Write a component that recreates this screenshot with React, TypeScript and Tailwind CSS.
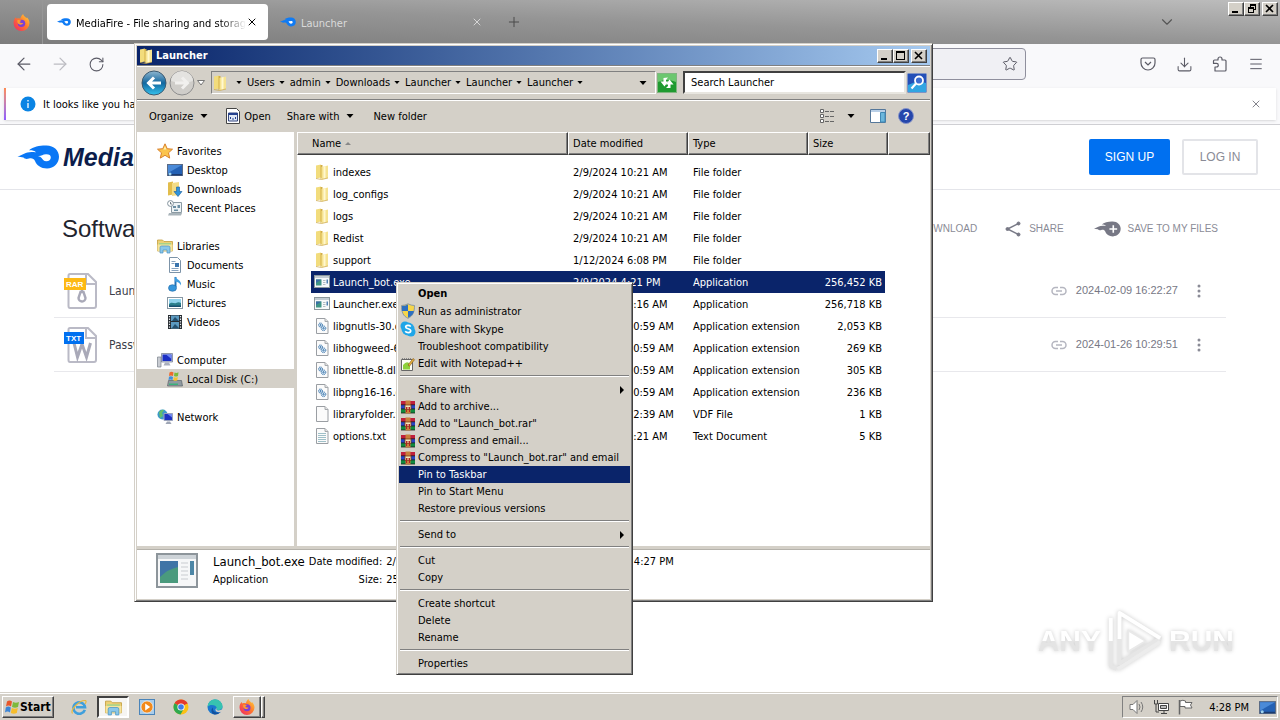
import { ReactNode } from "react";
import {
  ArrowLeft,
  ArrowRight,
  ChevronDown,
  Download,
  Menu,
  Plus,
  RotateCw,
  Star,
  X,
} from "lucide-react";

const UI_FONT = "font-['DejaVu_Sans_Condensed','DejaVu_Sans',sans-serif]";
const RAISED =
  "border border-t-white border-l-white border-r-[#404040] border-b-[#404040] bg-[#d4d0c8] shadow-[inset_-1px_-1px_0_#808080]";

type IconProps = { className?: string };

/* ---------- small icons ---------- */

function FolderIcon({ className = "h-4 w-4" }: IconProps) {
  return (
    <svg viewBox="0 0 16 16" className={className} aria-hidden="true">
      <path d="M2 1.500 7 .5v13l-5 1z" fill="#f2dc7c" />
      <path d="M6.500 1h2v13l-2 1z" fill="#d3ae45" />
      <path d="M7.500 3 14 1.500V14l-6.500 1.500z" fill="#f6e391" />
      <path d="M9.500 2.500 11.500 2v12.500l-2 .5z" fill="#fff8cf" />
      <path d="M2 14.500 7.500 15.500 14 14" fill="none" stroke="#c9a548" strokeWidth=".7" />
    </svg>
  );
}

function ExeIcon({ className = "h-4 w-4" }: IconProps) {
  return (
    <svg viewBox="0 0 16 16" className={className} aria-hidden="true">
      <rect x=".5" y="1.500" width="15" height="12" fill="#f7f9fa" stroke="#8b979c" />
      <path d="M1 2h14v2H1z" fill="#c3ccd2" />
      <path d="M2 5.500h5.500v6H2z" fill="#3f9585" />
      <path d="M2 5.500h5.500L2 9z" fill="#3a6ea5" />
      <path d="M9 6.500h2.500M9 8.500h2.500M9 10.500h2.500" stroke="#b4bcc2" />
      <path d="M12.500 5.500h1.500v4h-1.500z" fill="#4c7fb2" />
    </svg>
  );
}

function PageIcon({ kind }: { kind: "dll" | "blank" | "text" }) {
  return (
    <svg viewBox="0 0 16 16" className="h-4 w-4" aria-hidden="true">
      <path d="M2.500.5h8.500l3 3v12H2.500z" fill="#fbfbfb" stroke="#9a9ea3" />
      <path d="M11 .5v3h3" fill="#e3e3e3" stroke="#a5a9ad" />
      {kind === "dll" && (
        <g fill="#dbe9f5" stroke="#3a76ad">
          <circle cx="6.500" cy="7" r="2" strokeDasharray="1.200 .5" />
          <circle cx="9.500" cy="10.300" r="2.300" strokeDasharray="1.200 .5" />
          <circle cx="6.500" cy="7" r=".6" />
          <circle cx="9.500" cy="10.300" r=".7" />
        </g>
      )}
      {kind === "text" && (
        <path d="M4 5.500h8M4 7.500h8M4 9.500h8M4 11.500h8M4 13.500h8" stroke="#9fc0c8" />
      )}
    </svg>
  );
}

function StarIcon() {
  return (
    <svg viewBox="0 0 16 16" className="h-4 w-4" aria-hidden="true">
      <path
        d="m8 .8 2.200 4.900 5.300.5-4 3.600 1.200 5.300L8 12.300l-4.700 2.800 1.200-5.300-4-3.600 5.300-.5z"
        fill="#fbc44d"
        stroke="#d9802a"
      />
      <path d="m8 3 1.300 3.500H6.500z" fill="#fff0b0" />
    </svg>
  );
}

function DesktopIcon({ className = "h-4 w-4" }: IconProps) {
  return (
    <svg viewBox="0 0 16 16" className={className} aria-hidden="true">
      <rect x=".5" y="2.500" width="15" height="11" fill="#2461b4" stroke="#5b6b85" />
      <path d="M1 3h14L1 11z" fill="#4a8ad8" />
      <path d="M1 12h14v1.500H1z" fill="#1b3b70" />
      <circle cx="3" cy="12" r="1.500" fill="#9fd3ee" />
    </svg>
  );
}

function DownloadsIcon() {
  return (
    <svg viewBox="0 0 16 16" className="h-4 w-4" aria-hidden="true">
      <path d="M1 1.500 6 .5v13l-5 1z" fill="#e2bd4c" />
      <path d="M5 2 12 1v13l-7 1z" fill="#f3dc86" />
      <path d="M9.500 6h3v4.500H15L11 15.500 7 10.500h2.500z" fill="#2f93dc" stroke="#1a5c9b" strokeWidth=".6" />
    </svg>
  );
}

function RecentIcon() {
  return (
    <svg viewBox="0 0 16 16" className="h-4 w-4" aria-hidden="true">
      <path d="M4.500 2.500h10v10h-10z" fill="#eef3f5" stroke="#8b9aa3" />
      <path d="M6 6h3v2H6zM10.500 5H13v3h-2.500zM7 9.500h4v1.500H7z" fill="#6b8ea3" />
      <path d="M2 13h13l-1 2.500H1z" fill="#a9b4ba" />
      <circle cx="3.500" cy="3.500" r="2.900" fill="#fff" stroke="#80919b" />
      <path d="M3.500 2v2H5" fill="none" stroke="#52616a" strokeWidth=".8" />
    </svg>
  );
}

function LibraryIcon({ className = "h-4 w-4" }: IconProps) {
  return (
    <svg viewBox="0 0 16 16" className={className} aria-hidden="true">
      <path d="M.5 13V2h5l1.500 1.500h8.500V13z" fill="#edd176" stroke="#c39d3c" strokeWidth=".8" />
      <path d="M2 5h12v4H2z" fill="#a6d38a" />
      <path d="M.5 6.500h15V13H.5z" fill="#f7e49c" />
      <path d="M3 15V9.500q0-1.500 1.500-1.500h7q1.500 0 1.500 1.500V15h-3v-3H6v3z" fill="#8ac7ea" stroke="#4794c4" strokeWidth=".7" />
    </svg>
  );
}

function DocumentsIcon() {
  return (
    <svg viewBox="0 0 16 16" className="h-4 w-4" aria-hidden="true">
      <path d="M2.500.5h8l3 3v12h-11z" fill="#fff" stroke="#7c93a8" />
      <path d="M4.500 4.500h4M4.500 6.500h3M4.500 11.500h7M4.500 13.500h7" stroke="#87a3bf" />
      <path d="M8 6h4v4H8z" fill="#3974ad" />
    </svg>
  );
}

function MusicIcon() {
  return (
    <svg viewBox="0 0 16 16" className="h-4 w-4" aria-hidden="true">
      <path d="M8.500 1v10" stroke="#2173b8" strokeWidth="2" />
      <path d="M8 .5c1 3 7 3.500 6 9-.8-2.500-3-3.500-6-4z" fill="#3f9ee0" />
      <ellipse cx="5.500" cy="12" rx="4" ry="3.300" fill="#3597dc" stroke="#1d66a5" strokeWidth=".6" />
    </svg>
  );
}

function PicturesIcon() {
  return (
    <svg viewBox="0 0 16 16" className="h-4 w-4" aria-hidden="true">
      <rect x=".5" y="2.500" width="15" height="11" fill="#fff" stroke="#8797a3" />
      <path d="M2 4h12v8H2z" fill="#8fd2ec" />
      <path d="M2 9c3-3 5 0 7-1s3-1 5 0v4H2z" fill="#2b7f8c" />
      <path d="M2 10.500h12V12H2z" fill="#174f70" />
    </svg>
  );
}

function VideosIcon() {
  return (
    <svg viewBox="0 0 16 16" className="h-4 w-4" aria-hidden="true">
      <path d="M1 1h14v14H1z" fill="#262b30" />
      <path d="M4 1.500h8V7H4zM4 8h8v6.500H4z" fill="#5c9ac0" />
      <path d="m5 7 3-4 4 4zM5 14l3-4 4 4z" fill="#24506e" />
      <path d="M2.500 2v12M13.500 2v12" stroke="#e8ecef" strokeWidth="1.200" strokeDasharray="1.300 1.300" />
    </svg>
  );
}

function ComputerIcon() {
  return (
    <svg viewBox="0 0 16 16" className="h-4 w-4" aria-hidden="true">
      <path d="M.5 5h3.500v10H.5z" fill="#c9ccd2" stroke="#7a818c" strokeWidth=".7" />
      <path d="M4.500 1.500h11v8.500h-11z" fill="#c9cfe0" stroke="#6c758b" strokeWidth=".7" />
      <path d="M5.500 2.500h9V9h-9z" fill="#1b2fc4" />
      <path d="M9 2.500h5.500V7z" fill="#6f87f2" />
      <path d="M8 10.500h4l1.500 3h-7z" fill="#a9afbd" />
    </svg>
  );
}

function DiskIcon() {
  return (
    <svg viewBox="0 0 16 16" className="h-4 w-4" aria-hidden="true">
      <path d="M1.500 9.500h13l1 5.500H.5z" fill="#8f9aa0" stroke="#596268" strokeWidth=".7" />
      <path d="M2 12.500h9V14H2z" fill="#3bb27a" />
      <path d="M2.500 1.500q2-1.500 4 0L6 5q-2-1-4 0z" fill="#ef6a2d" />
      <path d="M7.500 1.500q2 1 4-.3L11 5q-2 1-4 0z" fill="#7cbc3a" />
      <path d="M2 5.800q2-1 4 .2L5.500 9q-2-1-4 0z" fill="#3f8fdc" />
      <path d="M6.800 6q2 1 4 0l-.5 3.300q-2 1-4 0z" fill="#f8c32e" />
    </svg>
  );
}

function NetworkIcon() {
  return (
    <svg viewBox="0 0 16 16" className="h-4 w-4" aria-hidden="true">
      <circle cx="5.500" cy="5.500" r="5" fill="#3b9ac9" />
      <path d="M2 3q3-3 5-2L5 4l1 3-3 2z" fill="#63bf6a" />
      <path d="M7 4.500h8.500v7H7z" fill="#1e32c2" stroke="#9aa3bd" />
      <path d="M10.500 5H15v3.500z" fill="#7188f0" />
      <path d="M10 12.500h3l1.500 2.500h-6z" fill="#9fa6b5" />
    </svg>
  );
}

function ShieldIcon() {
  return (
    <svg viewBox="0 0 16 16" className="h-4 w-4" aria-hidden="true">
      <path d="M8 .8Q5 2.500 1.500 2.500C1.500 9 3 13 8 15.300c5-2.300 6.500-6.300 6.500-12.800Q11 2.500 8 .8z" fill="#f6d64a" stroke="#8a99a5" />
      <path d="M8 1.500v6.500H2Q1.800 6 2 3q3 0 6-1.500zM8 8h6q-.8 4.500-6 6.800z" fill="#2d6fc0" />
    </svg>
  );
}

function SkypeIcon() {
  return (
    <svg viewBox="0 0 16 16" className="h-4 w-4" aria-hidden="true">
      <circle cx="5" cy="5" r="4.500" fill="#20a6e8" />
      <circle cx="11" cy="11" r="4.500" fill="#20a6e8" />
      <circle cx="8" cy="8" r="6.500" fill="#20a6e8" />
      <path d="M10.800 5.500Q9.500 4.200 7.800 4.300 5.700 4.500 5.700 6c0 2.300 5 1.200 5 3.800 0 2.400-4 2.500-5.500.5" fill="none" stroke="#fff" strokeWidth="1.700" />
    </svg>
  );
}

function NotepadIcon() {
  return (
    <svg viewBox="0 0 16 16" className="h-4 w-4" aria-hidden="true">
      <path d="M1.500 3.500h11v11h-11z" fill="#fdfdf6" stroke="#666" />
      <path d="M2 2.500h10" stroke="#888" strokeDasharray="1 1" />
      <path d="M3 9q4-5 7-1v5.500H3z" fill="#8fd13b" />
      <path d="m8 9 5-6.500 1.500 1.200-5 6.500z" fill="#e5b23d" stroke="#7c4e16" strokeWidth=".6" />
    </svg>
  );
}

function WinRarIcon() {
  return (
    <svg viewBox="0 0 16 16" className="h-4 w-4" aria-hidden="true">
      <path d="M1 2h14v4H1z" fill="#c01f3c" />
      <path d="M1 6h14v4H1z" fill="#2746c4" />
      <path d="M1 10h14v4H1z" fill="#0f8a3f" />
      <path d="M1 5.800h14M1 9.900h14M1 14h14" stroke="#1c1c1c" strokeWidth=".8" />
      <path d="M5.500 1.500h5v13h-5z" fill="#c9803c" />
      <path d="M5 6h6v4.500H5z" fill="#f4e6b6" stroke="#7c3a16" strokeWidth=".8" />
      <path d="M6.500 13V8l1.500 1.500L9.500 8v5" fill="none" stroke="#b22424" />
    </svg>
  );
}

function FirefoxIcon({ className = "h-4 w-4" }: IconProps) {
  return (
    <svg viewBox="0 0 16 16" className={className} aria-hidden="true">
      <defs>
        <linearGradient id="fx" x1="1" y1="0" x2="0" y2="1">
          <stop offset="0" stopColor="#ffdc3e" />
          <stop offset=".45" stopColor="#ff7a2b" />
          <stop offset="1" stopColor="#f0206a" />
        </linearGradient>
      </defs>
      <path d="M9.500 0c.3 1.800 2 2.500 3 3.800l.8-.6c1.300 1.500 2.200 3.300 2.200 5.300A7.500 7.500 0 0 1 .5 8.500C.5 6 1.300 4.200 2.800 3l.5 1.400C5 3.600 6 4 7 4.300 7.200 2.500 8.300 1 9.500 0z" fill="url(#fx)" />
      <circle cx="8" cy="8.800" r="3.500" fill="#7b3fd6" />
      <path d="M4 6.200c1.500-1 2.800-.3 4 .5-1 .1-1.500.6-1.700 1.300 1 .8 2.400 0 3.400.8-1.500 2-4.700 1.500-5.500-.8z" fill="#ff9a2e" />
    </svg>
  );
}

function FlameIcon({ className, fill = "#0f7bf5" }: IconProps & { fill?: string }) {
  return (
    <svg viewBox="0 0 42 24" className={className} aria-hidden="true">
      <path d="M0 11.500C5 10 8 7 14 7c1.800 0 3 .3 4.500.2C17 5.500 14 5 11.500 5.200 16 1.500 23 .3 29 .5c7.500.2 12.500 5 12.500 11.300S36.500 23.500 29.500 23.500c-6 0-10.500-3.300-12-7.500-1-2.500-3.500-3.300-6-2.500C9 14.300 7.500 14 6 12.500 4 12 2 11.800 0 11.500z" fill={fill} />
      <path d="M20.500 11c3 .5 4.500-1.500 8-1.700 3.200-.1 4.800 1 4.800 3.200s-1.800 3.800-4.500 3.800c-2.500 0-3.500-1.500-4.500-3-1-1.300-2-1.800-3.800-2.300z" fill="#fff" />
    </svg>
  );
}

function WindowsFlag({ className = "h-4 w-4" }: IconProps) {
  return (
    <svg viewBox="0 0 16 16" className={className} aria-hidden="true">
      <path d="M3 2.500q2.500-2 5 0L7 7.500q-2.500-1.800-5 0z" fill="#e8562a" />
      <path d="M9 3q2.800 1.500 6 0l-1 5q-3 1.500-6 0z" fill="#7db93b" />
      <path d="M1.800 8.500q2.500-1.800 5 0L6 13.500q-2.500-1.800-5 0z" fill="#3c85d6" />
      <path d="M7.800 9q3 1.500 6 0l-1 5q-3 1.500-6 0z" fill="#f6bd2c" />
    </svg>
  );
}

function IeIcon() {
  return (
    <svg viewBox="0 0 16 16" className="h-4 w-4" aria-hidden="true">
      <path d="M13.800 10.800A5.800 5.800 0 1 1 14 8.200H5" fill="none" stroke="#3f9fdc" strokeWidth="2.600" />
      <path d="M1.500 14.500C-1 11 8 1 14.500 1.500c1.500 1-.5 3.500-.5 3.500" fill="none" stroke="#e9b93c" strokeWidth="1.200" />
    </svg>
  );
}

function MediaPlayerIcon() {
  return (
    <svg viewBox="0 0 16 16" className="h-4 w-4" aria-hidden="true">
      <rect x=".5" y=".5" width="15" height="15" fill="#a9cdeb" stroke="#4a84b9" />
      <circle cx="8" cy="8" r="6" fill="#f28a1c" stroke="#fff" strokeWidth=".6" />
      <path d="m6.200 4.500 5 3.500-5 3.500z" fill="#fff" />
    </svg>
  );
}

function ChromeIcon() {
  return (
    <svg viewBox="0 0 16 16" className="h-4 w-4" aria-hidden="true">
      <circle cx="8" cy="8" r="7.500" fill="#fbc116" />
      <path d="M8 8 1.500 4.200A7.500 7.500 0 0 1 14.500 4.200z" fill="#e33b2e" />
      <path d="M8 8 1.500 4.200A7.500 7.500 0 0 0 7.500 15.500L11 9.500z" fill="#2da94f" />
      <path d="M8 4.500h6.600L14 3.500H8z" fill="#e33b2e" />
      <circle cx="8" cy="8" r="3.600" fill="#fff" />
      <circle cx="8" cy="8" r="2.800" fill="#3f7de8" />
    </svg>
  );
}

function EdgeIcon() {
  return (
    <svg viewBox="0 0 16 16" className="h-4 w-4" aria-hidden="true">
      <circle cx="8" cy="8" r="7.500" fill="#1b78cf" />
      <path d="M.5 8A7.500 7.500 0 0 1 15.500 7.500c0 2.500-2 3.800-4.500 3.500-2-.2-1.800-1.200-1.300-2C9.500 6 3 4.500.5 8z" fill="#37c3b0" />
      <path d="M6 8.500c-1 4 3.500 6 7.500 4.500a7.500 7.500 0 0 1-6 2.500C4 15 3.500 10 6 8.500z" fill="#12509f" />
      <path d="M9.700 9c-.8 1-.5 2.300 1.800 2.500 1.500 0 3-.5 4-1.700l.5 1.700-2.500 1.500C9 14 7 10.500 9.700 9z" fill="#d4d0c8" />
    </svg>
  );
}

/* Down-pointing triangle used next to menus and breadcrumbs */
function Caret({ className = "h-1 w-2" }: IconProps) {
  return (
    <svg viewBox="0 0 8 4" className={className} aria-hidden="true">
      <path d="M.5 0h7L4 4z" fill="currentColor" />
    </svg>
  );
}

function CaptionButton({ kind }: { kind: "min" | "max" | "restore" | "close" }) {
  return (
    <button type="button" aria-label={kind} className={`flex h-3.5 w-4 items-center justify-center ${RAISED}`}>
      <svg viewBox="0 0 12 10" className="h-2.5 w-3" shapeRendering="crispEdges" fill="none" stroke="#000" aria-hidden="true">
        {kind === "min" && <path d="M2 8h6" strokeWidth="2" />}
        {kind === "max" && (
          <>
            <path d="M1.500 1.500h8v7h-8z" />
            <path d="M1 1h9" strokeWidth="2" />
          </>
        )}
        {kind === "restore" && <path d="M4.500 3V.5h5v5H8M2.500 4.500h5v4h-5zM2 3.500h6M4 1.500h6" />}
        {kind === "close" && <path d="m2 1 7 7M9 1 2 8" strokeWidth="1.600" shapeRendering="auto" />}
      </svg>
    </button>
  );
}

/* ---------- browser behind the window ---------- */

function TabStrip() {
  return (
    <div className="flex h-11 items-start bg-linear-to-tr from-[#7c7c7c] via-[#959595] to-[#bdbdbd]">
      <div className="flex h-11 w-[43px] items-center justify-center border-r border-[#979797]">
        <FirefoxIcon className="h-[17px] w-[17px]" />
      </div>
      <div className="mt-1 ml-1 flex h-9 w-[221px] items-center rounded bg-white px-2.5">
        <FlameIcon className="h-2.5 w-3.5 shrink-0" />
        <span className="ml-1 flex-1 overflow-hidden mask-r-from-85% pt-0.5 pl-px whitespace-nowrap text-black">
          MediaFire - File sharing and storage
        </span>
        <button type="button" aria-label="Close tab">
          <X className="h-3 w-3 text-black" strokeWidth={2} />
        </button>
      </div>
      <div className="mt-1 flex h-9 w-[221px] items-center pr-1.5 pl-3">
        <FlameIcon className="h-3.5 w-4 shrink-0" />
        <span className="ml-1 flex-1 pt-0.5 pl-px text-[#dadada]">Launcher</span>
        <button type="button" aria-label="Close tab">
          <X className="h-3 w-3 text-[#d5d5d5]" strokeWidth={2} />
        </button>
      </div>
      <button type="button" aria-label="New tab" className="mt-1 ml-[17px] flex h-9 w-4 items-center justify-center">
        <Plus className="h-4 w-4 shrink-0 text-[#4a4a4a]" strokeWidth={1.500} />
      </button>
      <button type="button" aria-label="List all tabs" className="mt-1 ml-auto flex h-9 items-center">
        <ChevronDown className="h-[18px] w-[18px] text-[#555]" strokeWidth={1.500} />
      </button>
      <div className="mt-0.5 mr-0.5 ml-[52px] flex">
        <CaptionButton kind="min" />
        <CaptionButton kind="restore" />
        <span className="w-0.5" />
        <CaptionButton kind="close" />
      </div>
    </div>
  );
}

function ToolbarButton({ label, children }: { label: string; children: ReactNode }) {
  return (
    <button type="button" aria-label={label} className="flex h-8 w-9 items-center justify-center">
      {children}
    </button>
  );
}

function NavBar() {
  return (
    <div className="flex h-11 items-center bg-[#f9f9fb] px-1.5 pb-1 text-[#5b5b66]">
      <ToolbarButton label="Back">
        <ArrowLeft className="h-5 w-5" strokeWidth={1.500} />
      </ToolbarButton>
      <ToolbarButton label="Forward">
        <ArrowRight className="h-5 w-5 text-[#bcbcc2]" strokeWidth={1.500} />
      </ToolbarButton>
      <ToolbarButton label="Reload">
        <RotateCw className="h-[17px] w-[17px]" strokeWidth={1.500} />
      </ToolbarButton>
      <div className="mr-[104px] ml-32 flex h-8 flex-1 items-center justify-end rounded border border-[#8f8f9d] bg-[#f0f0f4] pr-[7px]">
        <button type="button" aria-label="Bookmark this page">
          <Star className="h-4 w-4" strokeWidth={1.500} />
        </button>
      </div>
      <ToolbarButton label="Save to Pocket">
        <svg viewBox="0 0 16 16" className="h-4 w-4" fill="none" stroke="currentColor" strokeWidth="1.200" aria-hidden="true">
          <path d="M2.500 2h11q1.500 0 1.500 1.500V7A7 7 0 0 1 1 7V3.500Q1 2 2.500 2zM5 6l3 3 3-3" />
        </svg>
      </ToolbarButton>
      <ToolbarButton label="Downloads">
        <Download className="h-[17px] w-[17px]" strokeWidth={1.500} />
      </ToolbarButton>
      <ToolbarButton label="Extensions">
        <svg viewBox="0 0 16 16" className="h-4 w-4" fill="none" stroke="currentColor" strokeWidth="1.200" strokeLinejoin="round" aria-hidden="true">
          <path d="M3 15V11h1.500a1.800 1.800 0 0 0 0-3.600H1.500V5q0-1 1-1H6V3a2 2 0 0 1 4 0v1h3q1 0 1 1v9q0 1-1 1z" />
        </svg>
      </ToolbarButton>
      <ToolbarButton label="Open menu">
        <Menu className="h-4 w-4" strokeWidth={1.500} />
      </ToolbarButton>
    </div>
  );
}

function NoticeBar() {
  return (
    <div className="border-b border-[#cfcfd3] bg-[#f9f9fb] px-1 pb-1">
      <div className="flex h-8 items-center bg-white pr-3.5 shadow-sm">
        <span className="h-8 w-0.5 bg-linear-to-b from-[#ff8a50] to-[#9059ff]" />
        <svg viewBox="0 0 16 16" className="ml-3.5 h-4 w-4" aria-hidden="true">
          <circle cx="8" cy="8" r="7.500" fill="#0a84e4" />
          <path d="M8 7v5M8 4v1.500" stroke="#fff" strokeWidth="1.300" />
        </svg>
        <p className="ml-[7px] text-black">It looks like you haven't started Firefox in a while.</p>
        <button type="button" aria-label="Close" className="ml-auto">
          <X className="h-3 w-3 text-[#5b5b66]" strokeWidth={1.500} />
        </button>
      </div>
    </div>
  );
}

const sharedFiles = [
  { name: "Launcher.rar", tag: "RAR", date: "2024-02-09 16:22:27" },
  { name: "Password.txt", tag: "TXT", date: "2024-01-26 10:29:51" },
];

function SharedFileIcon({ tag }: { tag: string }) {
  const rar = tag === "RAR";
  return (
    <svg viewBox="0 0 34 36" className="h-9 w-[34px]" aria-hidden="true">
      <path d="M6 1h18l8 8v24q0 2-2 2H6q-1.500 0-1.500-2V2.500Q4.500 1 6 1zM22 1v10h10" fill="#fff" stroke="#babac6" strokeWidth="2" />
      {rar ? (
        <path d="M18 12v6M16.500 19h3l2 6a3.500 3.500 0 1 1-7 0z" fill="none" stroke="#a9a9b8" strokeWidth="2.400" />
      ) : (
        <path d="M10 16l3.500 14L18 17l4.500 13L26.500 16" fill="none" stroke="#a9a9b8" strokeWidth="3" />
      )}
      <path d={rar ? "M0 5h22v12H0z" : "M0 5h20v12H0z"} fill={rar ? "#fdb913" : "#0070f0"} />
      <text x="2" y="14" fontSize="8" fontWeight="700" fill="#fff" fontFamily="Liberation Sans, sans-serif">
        {tag}
      </text>
    </svg>
  );
}

function MediaFirePage() {
  return (
    <div className="relative flex-1 bg-white font-['Liberation_Sans',Arial,sans-serif] text-[#8a8b96]">
      <header className="flex h-[65px] items-center border-b border-[#e4e5ea] pr-[22px] pl-[17px]">
        <a href="#home" className="flex items-center">
          <FlameIcon className="h-6 w-[43px]" fill="#0a77f5" />
          <span className="ml-[3px] text-[25px] font-bold text-[#0c1d4b] italic">MediaFire</span>
        </a>
        <button type="button" className="ml-auto h-9 w-[81px] rounded-xs bg-[#0070f0] text-xs text-white">
          SIGN UP
        </button>
        <button type="button" className="ml-3 h-9 w-[76px] rounded-xs border-2 border-[#e3e4e8] bg-white text-xs">
          LOG IN
        </button>
      </header>

      <section className="mx-[54px]">
        <div className="flex h-[74px] items-center px-2 pt-[3px]">
          <h1 className="text-2xl text-[#22242e]">Software</h1>
          <div className="ml-auto flex items-center text-[10px]">
            <a href="#download">DOWNLOAD</a>
            <a href="#share" className="ml-7 flex items-center">
              <svg viewBox="0 0 16 16" className="h-4 w-4" fill="#777885" stroke="#777885" aria-hidden="true">
                <path d="M13.500 2.500 2.500 8l11 5.500" fill="none" strokeWidth="1.500" />
                <circle cx="13.500" cy="2.500" r="1.500" />
                <circle cx="2.500" cy="8" r="1.500" />
                <circle cx="13.500" cy="13.500" r="1.500" />
              </svg>
              <span className="ml-2">SHARE</span>
            </a>
            <a href="#save" className="ml-[30px] flex items-center">
              <svg viewBox="0 0 42 24" className="h-4 w-[27px]" aria-hidden="true">
                <path d="M0 11.500C5 10 8 7 14 7c1.800 0 3 .3 4.500.2C17 5.500 14 5 11.500 5.200 16 1.500 23 .3 29 .5c7.500.2 12.500 5 12.500 11.300S36.500 23.500 29.500 23.500c-6 0-10.500-3.300-12-7.500-1-2.500-3.500-3.300-6-2.500C9 14.300 7.500 14 6 12.500 4 12 2 11.800 0 11.500z" fill="#777885" />
                <path d="M30 6v12M24 12h12" stroke="#fff" strokeWidth="2.500" />
              </svg>
              <span className="ml-[7px]">SAVE TO MY FILES</span>
            </a>
          </div>
        </div>
        <ul>
          {sharedFiles.map((file) => (
            <li key={file.name} className="flex h-[54px] items-center border-b border-[#e8e8ec] pr-6 pl-[10px]">
              <SharedFileIcon tag={file.tag} />
              <span className={`ml-[11px] text-xs text-[#3b3d49] ${UI_FONT}`}>{file.name}</span>
              <svg viewBox="0 0 16 10" className="ml-auto h-2.5 w-4" fill="none" stroke="#b5b6c0" strokeWidth="1.500" aria-hidden="true">
                <path d="M7 1.500H4.500a3.500 3.500 0 0 0 0 7H7M9 1.500h2.500a3.500 3.500 0 0 1 0 7H9M5 5h6" />
              </svg>
              <time className="ml-[9px] text-[11px] text-[#777885]">{file.date}</time>
              <button type="button" aria-label={`More actions for ${file.name}`} className="ml-[18px]">
                <svg viewBox="0 0 6 14" className="h-3.5 w-1.5" fill="#8a8b96" aria-hidden="true">
                  <circle cx="3" cy="2" r="1.500" />
                  <circle cx="3" cy="7" r="1.500" />
                  <circle cx="3" cy="12" r="1.500" />
                </svg>
              </button>
            </li>
          ))}
        </ul>
      </section>

      <Watermark />
    </div>
  );
}

function Watermark() {
  const word =
    "bg-linear-to-b from-white from-50% to-[#e4e4e4] to-50% bg-clip-text text-3xl leading-[38px] font-bold text-transparent";
  return (
    <div className="absolute right-[46px] bottom-5 flex items-center drop-shadow-[0_0_2px_rgba(0,0,0,0.2)]">
      <span className={word}>ANY</span>
      <svg viewBox="0 0 60 64" className="mx-1 h-[62px] w-[60px]" fill="none" strokeLinejoin="round" aria-hidden="true">
        <path d="M5 8v50l6 3M14 3l42 26-42 26z" stroke="#e6e6e6" strokeWidth="4" />
        <path d="M5 32V8M14 30V3l42 26" stroke="#fff" strokeWidth="4" />
        <path d="M23 21v22l18-11z" fill="#fff" stroke="#e9e9e9" strokeWidth="2" />
        <path d="m12 61 44-28" stroke="#ececec" strokeWidth="4" />
      </svg>
      <span className={word}>RUN</span>
    </div>
  );
}

/* ---------- explorer window ---------- */

const crumbs = ["Users", "admin", "Downloads", "Launcher", "Launcher", "Launcher"];

const navGroups = [
  {
    label: "Favorites",
    icon: <StarIcon />,
    items: [
      { label: "Desktop", icon: <DesktopIcon /> },
      { label: "Downloads", icon: <DownloadsIcon /> },
      { label: "Recent Places", icon: <RecentIcon /> },
    ],
  },
  {
    label: "Libraries",
    icon: <LibraryIcon />,
    items: [
      { label: "Documents", icon: <DocumentsIcon /> },
      { label: "Music", icon: <MusicIcon /> },
      { label: "Pictures", icon: <PicturesIcon /> },
      { label: "Videos", icon: <VideosIcon /> },
    ],
  },
  {
    label: "Computer",
    icon: <ComputerIcon />,
    items: [{ label: "Local Disk (C:)", icon: <DiskIcon />, active: true }],
  },
  { label: "Network", icon: <NetworkIcon />, items: [] },
];

const files = [
  { name: "indexes", date: "2/9/2024 10:21 AM", type: "File folder", size: "", icon: <FolderIcon /> },
  { name: "log_configs", date: "2/9/2024 10:21 AM", type: "File folder", size: "", icon: <FolderIcon /> },
  { name: "logs", date: "2/9/2024 10:21 AM", type: "File folder", size: "", icon: <FolderIcon /> },
  { name: "Redist", date: "2/9/2024 10:21 AM", type: "File folder", size: "", icon: <FolderIcon /> },
  { name: "support", date: "1/12/2024 6:08 PM", type: "File folder", size: "", icon: <FolderIcon /> },
  { name: "Launch_bot.exe", date: "2/9/2024 4:21 PM", type: "Application", size: "256,452 KB", icon: <ExeIcon />, selected: true },
  { name: "Launcher.exe", date: "2/9/2024 10:16 AM", type: "Application", size: "256,718 KB", icon: <ExeIcon /> },
  { name: "libgnutls-30.dll", date: "1/12/2024 10:59 AM", type: "Application extension", size: "2,053 KB", icon: <PageIcon kind="dll" /> },
  { name: "libhogweed-6.dll", date: "1/12/2024 10:59 AM", type: "Application extension", size: "269 KB", icon: <PageIcon kind="dll" /> },
  { name: "libnettle-8.dll", date: "1/12/2024 10:59 AM", type: "Application extension", size: "305 KB", icon: <PageIcon kind="dll" /> },
  { name: "libpng16-16.dll", date: "1/12/2024 10:59 AM", type: "Application extension", size: "236 KB", icon: <PageIcon kind="dll" /> },
  { name: "libraryfolder.vdf", date: "1/31/2024 12:39 AM", type: "VDF File", size: "1 KB", icon: <PageIcon kind="blank" /> },
  { name: "options.txt", date: "2/9/2024 10:21 AM", type: "Text Document", size: "5 KB", icon: <PageIcon kind="text" /> },
];

function AddressRow() {
  return (
    <div className="flex h-[35px] items-center border-t border-b border-t-[#808080] border-b-[#808080] pr-[3px] pl-1 shadow-[inset_0_1px_0_#fff,0_1px_0_#fff]">
      <button type="button" aria-label="Back">
        <svg viewBox="0 0 26 26" className="h-[26px] w-[26px]" aria-hidden="true">
          <defs>
            <linearGradient id="orb" x1="0" y1="0" x2="0" y2="1">
              <stop offset="0" stopColor="#8fb6cf" />
              <stop offset=".5" stopColor="#12679f" />
              <stop offset="1" stopColor="#35c3ee" />
            </linearGradient>
          </defs>
          <circle cx="13" cy="13" r="12" fill="url(#orb)" stroke="#3d5a70" />
          <path d="M20 13H8M13 7.500 7.500 13l5.500 5.500" fill="none" stroke="#fff" strokeWidth="3" />
        </svg>
      </button>
      <button type="button" aria-label="Forward" className="ml-0.5">
        <svg viewBox="0 0 26 26" className="h-[26px] w-[26px]" aria-hidden="true">
          <circle cx="13" cy="13" r="12" fill="#cfcdc9" stroke="#8d8d8d" />
          <path d="M2 11a11 10 0 0 1 22 0q-11 4-22 0z" fill="#e4e3e0" />
          <path d="M6 13h12M13 7.500l5.500 5.500-5.500 5.500" fill="none" stroke="#f1f0ee" strokeWidth="3" />
        </svg>
      </button>
      <button type="button" aria-label="Recent locations" className="ml-0.5">
        <svg viewBox="0 0 8 6" className="h-1.5 w-2" aria-hidden="true">
          <path d="M.5.5h7L4 5z" fill="#fff" stroke="#777" />
        </svg>
      </button>
      <div className="ml-1.5 flex h-[23px] w-[445px] items-center border border-t-[#808080] border-r-white border-b-white border-l-[#808080]">
        <FolderIcon />
        <span className="flex w-3.5 justify-end"><Caret className="h-[3px] w-1.5" /></span>
        {crumbs.map((crumb, i) => (
          <button key={i} type="button" className="ml-[5px] flex items-center gap-1">
            <span>{crumb}</span>
            <Caret className="h-[3px] w-1.5" />
          </button>
        ))}
        <button type="button" aria-label="Previous locations" className="mr-2 ml-auto">
          <Caret />
        </button>
      </div>
      <button type="button" aria-label="Refresh" className="ml-px">
        <svg viewBox="0 0 20 20" className="h-5 w-5" aria-hidden="true">
          <rect x=".5" y=".5" width="19" height="19" fill="#1f9a30" stroke="#7fb57f" />
          <path d="M1 1h18v8Q10 5 1 9z" fill="#6cc76f" />
          <path d="M6.500 5v3.500h-3l4 5 3.500-5H9V7l2-2.500zM13.500 15v-3.500h3l-4-5-3.500 5h2V13l-2 2z" fill="#fff" />
        </svg>
      </button>
      <input
        type="text"
        aria-label="Search Launcher"
        placeholder="Search Launcher"
        className="ml-1.5 h-[23px] min-w-0 flex-1 border-2 border-t-[#404040] border-r-[#e8e6e0] border-b-[#e8e6e0] border-l-[#404040] bg-white px-1.5 outline-none placeholder:text-black"
      />
      <button type="button" aria-label="Search" className="ml-px">
        <svg viewBox="0 0 20 20" className="h-5 w-5" aria-hidden="true">
          <rect x=".5" y=".5" width="19" height="19" rx="1" fill="#2450b8" stroke="#7f93c4" />
          <path d="M1 12q9-5 18-2v9H1z" fill="#31a5e2" />
          <circle cx="12" cy="7.500" r="4" fill="#3b6cd0" stroke="#fff" strokeWidth="1.800" />
          <path d="m9 10.500-4.500 5" stroke="#fff" strokeWidth="2.200" />
        </svg>
      </button>
    </div>
  );
}

function CommandBar() {
  return (
    <div className="flex h-8 items-center pr-4 pl-3">
      <button type="button" className="flex items-center gap-[7px]">
        Organize <Caret />
      </button>
      <button type="button" className="ml-[18px] flex items-center gap-1">
        <svg viewBox="0 0 14 16" className="h-4 w-3.5" aria-hidden="true">
          <path d="M.5.5h10l3 3v12H.5z" fill="#fff" stroke="#444" />
          <path d="M2.500 5h9v8h-9z" fill="#dfe7f5" stroke="#33457e" />
          <path d="M2.500 5h9v2h-9z" fill="#24418f" />
          <path d="M4.500 9v2M7 10v2M9.500 9v2" stroke="#24418f" />
        </svg>
        Open
      </button>
      <button type="button" className="ml-4 flex items-center gap-[7px]">
        Share with <Caret />
      </button>
      <button type="button" className="ml-[19px]">New folder</button>
      <button type="button" aria-label="Change your view" className="ml-auto flex items-center gap-3">
        <svg viewBox="0 0 16 14" className="h-3.5 w-4" fill="none" stroke="#666" aria-hidden="true">
          <path d="M1.500.5h3v3h-3zM1.500 5.500h3v3h-3zM1.500 10.500h3v3h-3z" fill="#fff" />
          <path d="M6 2.500h9M6 7.500h9M6 12.500h9" strokeDasharray="4 1" />
        </svg>
        <Caret />
      </button>
      <button type="button" aria-label="Show the preview pane" className="ml-[15px]">
        <svg viewBox="0 0 16 14" className="h-3.5 w-4" aria-hidden="true">
          <path d="M.5.5h15v13H.5z" fill="#fff" stroke="#55779a" />
          <path d="M1 1h14v2H1z" fill="#b9cfe6" />
          <path d="M10.500 3.500h4.500V13h-4.500z" fill="#6bb6dc" stroke="#3f88b5" />
        </svg>
      </button>
      <button type="button" aria-label="Get help" className="ml-3">
        <svg viewBox="0 0 16 16" className="h-4 w-4" aria-hidden="true">
          <circle cx="8" cy="8" r="7.500" fill="#2546ab" stroke="#8593c8" />
          <text x="8" y="12" fontSize="11" fontWeight="700" fill="#fff" textAnchor="middle" fontFamily="Liberation Sans, sans-serif">
            ?
          </text>
        </svg>
      </button>
    </div>
  );
}

function NavTree() {
  return (
    <nav className="flex w-[157px] shrink-0 flex-col gap-[19px] bg-white pt-[9px]">
      {navGroups.map((group) => (
        <div key={group.label}>
          <a href="#group" className="flex h-[19px] items-center gap-1 pt-px pl-5">
            {group.icon}
            {group.label}
          </a>
          {group.items.map((item) => (
            <a
              key={item.label}
              href="#item"
              className={`flex h-[19px] items-center gap-1 pt-px pl-[30px] ${"active" in item ? "bg-[#d4d0c8]" : ""}`}
            >
              {item.icon}
              {item.label}
            </a>
          ))}
        </div>
      ))}
    </nav>
  );
}

function FileTable() {
  const th = `h-[23px] text-left font-normal ${RAISED}`;
  return (
    <div className="flex-1 bg-white">
      <table className="w-full table-fixed border-separate border-spacing-0">
        <colgroup>
          <col className="w-3.5" />
          <col className="w-[257px]" />
          <col className="w-[120px]" />
          <col className="w-[120px]" />
          <col className="w-[77px]" />
          <col className="w-[3px]" />
          <col />
        </colgroup>
        <thead>
          <tr>
            <th colSpan={2} scope="col" className={`${th} pl-3.5`}>
              <span className="flex items-center gap-1">
                Name
                <svg viewBox="0 0 6 3" className="h-[3px] w-1.5" aria-hidden="true">
                  <path d="M0 3h6L3 0z" fill="#888" />
                </svg>
              </span>
            </th>
            <th scope="col" className={`${th} pl-1`}>Date modified</th>
            <th scope="col" className={`${th} pl-1`}>Type</th>
            <th colSpan={2} scope="col" className={`${th} pl-1`}>Size</th>
            <td className={th} />
          </tr>
        </thead>
        <tbody>
          <tr className="h-1.5">
            <td colSpan={7} />
          </tr>
          {files.map((file) => {
            const cell = file.selected ? "bg-[#0a246a] text-white" : "";
            return (
              <tr key={file.name} className="h-[22px]">
                <td />
                <td className={`pl-[3px] ${cell}`}>
                  <span className="flex items-center gap-[3px]">
                    {file.icon}
                    {file.name}
                  </span>
                </td>
                <td className={`pl-[5px] whitespace-nowrap ${cell}`}>{file.date}</td>
                <td className={`pl-[5px] whitespace-nowrap ${cell}`}>{file.type}</td>
                <td className={`pr-[3px] text-right whitespace-nowrap ${cell}`}>{file.size}</td>
                <td />
                <td />
              </tr>
            );
          })}
        </tbody>
      </table>
    </div>
  );
}

function DetailsPane() {
  return (
    <footer className="flex h-[50px] items-start border-t border-[#b5b2ab] bg-white pt-[3px] pl-[19px]">
      <svg viewBox="0 0 42 36" className="h-9 w-[42px]" aria-hidden="true">
        <rect x="1" y="1" width="40" height="33" fill="#f6f7f8" stroke="#8d959b" strokeWidth="2" />
        <path d="M2 2h38v4H2z" fill="#cdd3d8" />
        <path d="M4 8h18v22H4z" fill="#4a9a7d" />
        <path d="M4 8h18v6Q12 16 4 24z" fill="#3f74a6" />
        <path d="M25 10h7M25 14h7M25 18h7M25 22h7M25 26h7" stroke="#c9ccd0" />
        <path d="M34 8h4v14h-4z" fill="#4c86a6" />
      </svg>
      <div className="ml-[15px] grid grid-cols-[auto_auto_auto] gap-x-1 leading-[18px] whitespace-nowrap">
        <span className="text-[13px] leading-[18px]">Launch_bot.exe</span>
        <span className="text-right">Date modified:</span>
        <span>2/9/2024 4:21 PM</span>
        <span>Application</span>
        <span className="text-right">Size:</span>
        <span>250 MB</span>
      </div>
      <dl className="ml-5 flex w-[180px] justify-end gap-[5px] leading-[18px] whitespace-nowrap">
        <dt>Date created:</dt>
        <dd>2/9/2024 4:27 PM</dd>
      </dl>
    </footer>
  );
}

function ExplorerWindow() {
  return (
    <section
      aria-label="Launcher"
      className="absolute top-[43px] left-[134px] w-[799px] border border-t-[#d4d0c8] border-r-[#404040] border-b-[#404040] border-l-[#d4d0c8] bg-[#d4d0c8] p-0.5 text-black shadow-[inset_1px_1px_0_#fff,inset_-1px_-1px_0_#808080]"
    >
      <header className="flex h-[19px] items-center bg-linear-to-r from-[#0a246a] to-[#a6caf0] pr-[3px] pl-px">
        <FolderIcon />
        <h2 className="ml-0.5 font-bold text-white">Launcher</h2>
        <div className="ml-auto flex">
          <CaptionButton kind="min" />
          <CaptionButton kind="max" />
          <span className="w-0.5" />
          <CaptionButton kind="close" />
        </div>
      </header>
      <AddressRow />
      <CommandBar />
      <div className="flex h-[414px] gap-[3px]">
        <NavTree />
        <FileTable />
      </div>
      <div className="h-[3px]" />
      <DetailsPane />
    </section>
  );
}

/* ---------- context menu ---------- */

type MenuEntry = {
  label: string;
  icon?: ReactNode;
  tall?: boolean;
  bold?: boolean;
  submenu?: boolean;
  active?: boolean;
};

const menuGroups: MenuEntry[][] = [
  [
    { label: "Open", bold: true },
    { label: "Run as administrator", icon: <ShieldIcon />, tall: true },
    { label: "Share with Skype", icon: <SkypeIcon />, tall: true },
    { label: "Troubleshoot compatibility" },
    { label: "Edit with Notepad++", icon: <NotepadIcon /> },
  ],
  [
    { label: "Share with", submenu: true },
    { label: "Add to archive...", icon: <WinRarIcon /> },
    { label: 'Add to "Launch_bot.rar"', icon: <WinRarIcon /> },
    { label: "Compress and email...", icon: <WinRarIcon /> },
    { label: 'Compress to "Launch_bot.rar" and email', icon: <WinRarIcon /> },
    { label: "Pin to Taskbar", active: true },
    { label: "Pin to Start Menu" },
    { label: "Restore previous versions" },
  ],
  [{ label: "Send to", submenu: true }],
  [{ label: "Cut" }, { label: "Copy" }],
  [{ label: "Create shortcut" }, { label: "Delete" }, { label: "Rename" }],
  [{ label: "Properties" }],
];

function ContextMenu() {
  return (
    <div
      role="menu"
      className="absolute top-[282px] left-[396px] w-[237px] border border-t-[#d4d0c8] border-r-[#404040] border-b-[#404040] border-l-[#d4d0c8] bg-[#d4d0c8] p-0.5 text-black shadow-[inset_1px_1px_0_#fff,inset_-1px_-1px_0_#808080]"
    >
      {menuGroups.map((group, i) => (
        <div key={i}>
          {i > 0 && <hr className="mx-px mt-[3px] mb-1 h-0.5 border-0 border-t border-b border-t-[#808080] border-b-white" />}
          {group.map((entry) => (
            <button
              key={entry.label}
              type="button"
              role="menuitem"
              className={`flex w-full items-center pr-1.5 text-left whitespace-nowrap ${entry.tall ? "h-[18px]" : "h-[17px]"} ${
                entry.bold ? "font-bold" : ""
              } ${entry.active ? "bg-[#0a246a] text-white" : ""}`}
            >
              <span className="mr-0.5 ml-px w-4 shrink-0">{entry.icon}</span>
              {entry.label}
              {entry.submenu && (
                <svg viewBox="0 0 4 8" className="ml-auto h-2 w-1" aria-hidden="true">
                  <path d="M0 0v8l4-4z" />
                </svg>
              )}
            </button>
          ))}
        </div>
      ))}
    </div>
  );
}

/* ---------- taskbar ---------- */

function TaskbarApp({ label, children }: { label: string; children: ReactNode }) {
  return (
    <button type="button" aria-label={label} className="flex h-[22px] w-[34px] items-center justify-center">
      {children}
    </button>
  );
}

function Taskbar() {
  return (
    <footer className="flex h-7 items-center border-t border-[#d4d0c8] bg-[#d4d0c8] px-0.5 pt-px text-black shadow-[inset_0_1px_0_#fff]">
      <button type="button" className={`flex h-[22px] w-[52px] items-center pl-px font-bold ${RAISED}`}>
        <WindowsFlag className="h-4 w-4 shrink-0" />
        <span className="text-xs">Start</span>
      </button>
      <div className="ml-2 flex items-center">
        <TaskbarApp label="Internet Explorer"><IeIcon /></TaskbarApp>
        <button
          type="button"
          aria-label="Windows Explorer"
          className="mx-px flex h-[22px] w-8 items-center justify-center border-2 border-t-[#404040] border-r-white border-b-white border-l-[#404040] bg-[#f6f5f2]"
        >
          <LibraryIcon className="h-[17px] w-[17px]" />
        </button>
        <TaskbarApp label="Windows Media Player"><MediaPlayerIcon /></TaskbarApp>
        <TaskbarApp label="Google Chrome"><ChromeIcon /></TaskbarApp>
        <TaskbarApp label="Microsoft Edge"><EdgeIcon /></TaskbarApp>
        <button type="button" aria-label="Firefox" className="ml-px flex">
          <span className={`flex h-[22px] w-7 items-center justify-center ${RAISED}`}><FirefoxIcon /></span>
          <span className={`h-[22px] w-1 ${RAISED}`} />
        </button>
      </div>
      <div className="ml-auto flex h-[22px] items-center border border-t-[#808080] border-r-white border-b-white border-l-[#808080] pr-px pl-1.5">
        <svg viewBox="0 0 16 16" className="h-4 w-4" fill="#fff" stroke="#777" role="img" aria-label="Volume">
          <path d="M1 5.500h3l4-4v13l-4-4H1z" />
          <path d="M10 5q2 3 0 6M12 3q3.500 5 0 10" fill="none" />
        </svg>
        <svg viewBox="0 0 16 16" className="ml-2 h-4 w-4" fill="#fff" stroke="#444" role="img" aria-label="Network">
          <path d="M5.500 4.500h10v7h-10z" />
          <path d="M7.500 6.500h6v3h-6z" fill="#bbb" />
          <path d="M8 14.500h6M11 12v2M1.500 1v4h3V1M3 5v8h3" fill="none" />
        </svg>
        <svg viewBox="0 0 16 16" className="ml-2 h-4 w-4" fill="#fff" stroke="#666" role="img" aria-label="Action Center">
          <path d="M2.500 1v14.500" strokeWidth="1.500" />
          <path d="M3 2q3-1.500 5.500 0v1.500H15L13.500 6 15 9H8V7.500H3z" />
        </svg>
        <time className="ml-4">4:28 PM</time>
        <button type="button" aria-label="Show desktop" className="ml-2.5">
          <DesktopIcon className="h-[17px] w-[17px]" />
        </button>
      </div>
    </footer>
  );
}

export default function App() {
  return (
    <div className={`relative flex min-h-screen flex-col overflow-hidden bg-white text-[11px] leading-[17px] ${UI_FONT}`}>
      <TabStrip />
      <NavBar />
      <NoticeBar />
      <MediaFirePage />
      <Taskbar />
      <ExplorerWindow />
      <ContextMenu />
    </div>
  );
}
